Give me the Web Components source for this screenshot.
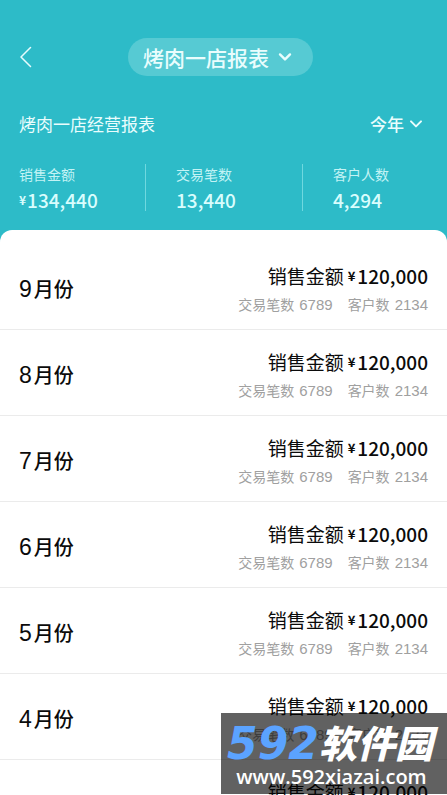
<!DOCTYPE html>
<html lang="zh-CN">
<head>
<meta charset="utf-8">
<meta name="viewport" content="width=device-width, initial-scale=1">
<title>烤肉一店报表</title>
<style>
  html, body { margin: 0; height: 100%; }
  body { font-family: "Noto Sans CJK SC", sans-serif; background: #2dbbc8; overflow: hidden; }
</style>
</head>
<body>
<report-app></report-app>
<script>
class BaseElement extends HTMLElement {
  constructor() {
    super();
    this.attachShadow({ mode: "open" });
  }
  connectedCallback() {
    this.shadowRoot.innerHTML = this.render();
  }
}

customElements.define("chevron-icon", class extends BaseElement {
  render() {
    return `<style>
      :host { display: inline-flex; width: 14px; height: 10px; }
      svg { width: 100%; height: 100%; fill: none; stroke: currentColor; stroke-linecap: round; stroke-linejoin: round; }
    </style>
    <svg viewBox="0 0 14 10" stroke-width="${this.getAttribute("weight") || 2}" aria-hidden="true"><path d="M2 2.4 7 7.4 12 2.4"/></svg>`;
  }
});

customElements.define("nav-bar", class extends BaseElement {
  render() {
    return `<style>
      :host { display: grid; grid-template-columns: 1fr auto 1fr; align-items: center; padding: 38px 23px 0 17px; }
      button { font: inherit; color: inherit; border: 0; background: none; padding: 0; }
      .back { display: flex; justify-self: start; padding-left: 3px; }
      .back svg { width: 12px; height: 22px; fill: none; stroke: #e6fcfd; stroke-width: 1.5; stroke-linecap: round; stroke-linejoin: round; }
      .shop { display: flex; align-items: center; gap: 9px; height: 38px; padding: 0 21px 0 15px; border-radius: 20px; background: #56cad3; font-size: 21px; font-weight: 500; line-height: 36px; }
    </style>
    <button class="back" aria-label="返回"><svg viewBox="0 0 12 22"><path d="M10.5 1.5 1 11l9.5 9.5"/></svg></button>
    <button class="shop"><slot></slot><chevron-icon weight="2.4"></chevron-icon></button>`;
  }
});

customElements.define("report-heading", class extends BaseElement {
  render() {
    return `<style>
      :host { display: flex; justify-content: space-between; align-items: center; padding: 36px 24px 0 19px; line-height: 24px; }
      h1 { margin: 0; font-size: 17px; font-weight: 400; }
      button { display: flex; align-items: center; gap: 5px; font: inherit; font-size: 17px; font-weight: 500; color: inherit; border: 0; background: none; padding: 0; }
    </style>
    <h1><slot></slot></h1>
    <button>${this.getAttribute("period")}<chevron-icon></chevron-icon></button>`;
  }
});

customElements.define("stat-cell", class extends BaseElement {
  render() {
    return `<style>
      :host { display: block; height: 47px; border-left: 1px solid #6fd8df; padding-left: 30px; }
      .label { font-size: 14px; line-height: 20px; color: #c3f3f5; }
      .value { font-size: 19px; line-height: 24px; padding-top: 4px; font-weight: 500; color: #d9fdfd; display: flex; align-items: center; gap: 1px; }
      small { font-size: 12px; line-height: 20px; font-weight: 700; }
    </style>
    <div class="label">${this.getAttribute("label")}</div>
    <div class="value">${this.hasAttribute("money") ? "<small>¥</small>" : ""}<span><slot></slot></span></div>`;
  }
});

customElements.define("month-row", class extends BaseElement {
  render() {
    return `<style>
      :host { display: flex; box-sizing: border-box; flex: none; justify-content: space-between; align-items: center; height: 86px; padding: 4px 19px 0; border-bottom: 1px solid #ebebeb; color: #0b0b0b; }
      h2 { margin: 0; display: flex; align-items: baseline; gap: 2px; font-size: 20px; font-weight: 500; line-height: 30px; }
      h2 span { font-family: "Liberation Sans", sans-serif; font-size: 23px; }
      .detail { text-align: right; padding-top: 4px; }
      .sales { display: flex; justify-content: flex-end; align-items: center; gap: 4px; font-size: 19px; line-height: 28px; }
      .sales strong { display: flex; align-items: center; gap: 2px; font-weight: 500; }
      small { font-size: 13px; line-height: 28px; font-weight: 700; }
      .counts { display: flex; justify-content: flex-end; gap: 15px; font-size: 14px; line-height: 28px; color: #a0a0a0; }
      .counts > span { display: flex; align-items: baseline; gap: 5px; }
      .counts b { font: 15px/28px "Liberation Sans", sans-serif; }
    </style>
    <h2><span>${this.getAttribute("month")}</span>月份</h2>
    <div class="detail">
      <div class="sales"><span>销售金额</span><strong><small>¥</small><span>${this.getAttribute("sales")}</span></strong></div>
      <div class="counts"><span>交易笔数 <b>${this.getAttribute("orders")}</b></span><span>客户数 <b>${this.getAttribute("customers")}</b></span></div>
    </div>`;
  }
});

customElements.define("site-badge", class extends BaseElement {
  render() {
    return `<style>
      :host { display: block; position: absolute; right: 0; bottom: 1px; width: 226px; height: 81px; overflow: hidden; background: rgba(0, 0, 0, .62); color: #fff; }
      .brand { display: flex; align-items: center; justify-content: center; padding: 9px 8px 0 0; font-style: italic; font-weight: 900; white-space: nowrap; }
      .num { font: italic 700 44px/44px "DejaVu Sans", sans-serif; color: #5ba3ff; }
      .name { font-size: 38px; line-height: 40px; padding-bottom: 4px; }
      .url { font: 600 20px/22px "Open Sans", "Noto Sans", sans-serif; text-align: center; padding-right: 5px; }
    </style>
    <div class="brand"><span class="num">592</span><span class="name">软件园</span></div>
    <div class="url">www.592xiazai.com</div>`;
  }
});

customElements.define("report-app", class extends BaseElement {
  render() {
    const months = [9, 8, 7, 6, 5, 4, 3];
    return `<style>
      :host { display: flex; flex-direction: column; position: relative; height: 100vh; overflow: hidden; color: #e9fdfd; background: #2dbbc8; }
      header { flex: none; }
      .stats { display: grid; grid-template-columns: repeat(3, 1fr); padding: 28px 0 19px; margin: 0 -12px; }
      main { flex: 1; min-height: 0; display: flex; flex-direction: column; overflow: hidden; padding-top: 14px; background: #fff; border-radius: 12px 12px 0 0; }
    </style>
    <header>
      <nav-bar>烤肉一店报表</nav-bar>
      <report-heading period="今年">烤肉一店经营报表</report-heading>
      <div class="stats">
        <stat-cell label="销售金额" money>134,440</stat-cell>
        <stat-cell label="交易笔数">13,440</stat-cell>
        <stat-cell label="客户人数">4,294</stat-cell>
      </div>
    </header>
    <main>${months.map(m => `<month-row month="${m}" sales="120,000" orders="6789" customers="2134"></month-row>`).join("")}</main>
    <site-badge></site-badge>`;
  }
});
</script>
</body>
</html>
